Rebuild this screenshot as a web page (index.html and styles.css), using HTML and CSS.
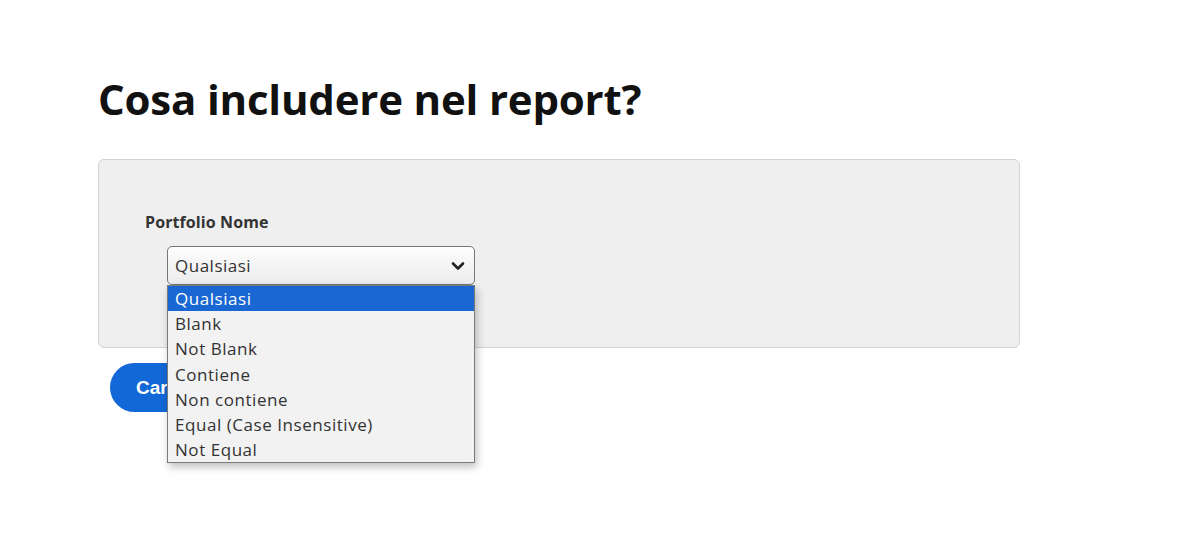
FILE: index.html
```html
<!DOCTYPE html>
<html lang="it">
<head>
<meta charset="utf-8">
<title>Report</title>
<link rel="stylesheet" href="styles.css">
</head>
<body>
<main class="page">
  <h1 class="title">Cosa includere nel report?</h1>
  <section class="panel">
    <div class="field">
      <div class="label">Portfolio Nome</div>
      <div class="select-wrap">
        <div class="select">
          <span class="select-value">Qualsiasi</span>
          <svg class="chev" width="14" height="10" viewBox="0 0 14 10"><path d="M2 2.5 L7 7.5 L12 2.5" fill="none" stroke="#222" stroke-width="2.6" stroke-linecap="round" stroke-linejoin="round"/></svg>
        </div>
        <ul class="dropdown">
          <li class="opt active">Qualsiasi</li>
          <li class="opt">Blank</li>
          <li class="opt">Not Blank</li>
          <li class="opt">Contiene</li>
          <li class="opt">Non contiene</li>
          <li class="opt">Equal (Case Insensitive)</li>
          <li class="opt">Not Equal</li>
        </ul>
      </div>
    </div>
  </section>
  <div class="actions">
    <button class="btn">Carica</button>
  </div>
</main>
</body>
</html>
```

FILE: styles.css
```css
html, body {
  margin: 0;
  padding: 0;
  background: #ffffff;
}
html { height: 100%; }
body {
  min-height: 535px;
  font-family: "Open Sans", "Liberation Sans", sans-serif;
  color: #333;
}
.page {
  padding: 70px 0 0 98px;
  width: 922px;
}
.title {
  margin: 0;
  font-family: "Open Sans", "Noto Sans", sans-serif;
  font-weight: 700;
  font-size: 42px;
  line-height: 58px;
  color: #111;
  letter-spacing: -0.2px;
}
.panel {
  margin-top: 31px;
  height: 187px;
  border: 1px solid #d3d3d3;
  border-radius: 6px;
  background: #efefef;
}
.field {
  padding: 52px 0 0 46px;
}
.label {
  font-family: "Open Sans", sans-serif;
  font-weight: 700;
  font-size: 16px;
  line-height: 20px;
  color: #333;
  letter-spacing: 0.1px;
}
.select-wrap {
  position: relative;
  margin: 14px 0 0 22px;
  width: 308px;
}
.select {
  box-sizing: border-box;
  height: 39px;
  border: 1px solid #777;
  border-radius: 5px;
  background: linear-gradient(#fdfdfd, #ececec);
  display: flex;
  align-items: center;
  justify-content: space-between;
  padding: 0 9px 0 7px;
}
.select-value {
  font-family: "Open Sans", sans-serif;
  font-size: 17px;
  color: #333;
  letter-spacing: 0.5px;
}
.chev { display: block; }
.dropdown {
  position: absolute;
  left: 0;
  top: 39px;
  width: 308px;
  box-sizing: border-box;
  margin: 0;
  padding: 0;
  list-style: none;
  background: #f2f2f2;
  border: 1px solid #7a7a7a;
  box-shadow: 2px 4px 8px rgba(0,0,0,0.25);
  z-index: 5;
}
.opt {
  height: 25.2px;
  line-height: 26px;
  padding-left: 7px;
  font-family: "Open Sans", sans-serif;
  font-size: 17px;
  color: #333;
  letter-spacing: 0.55px;
  white-space: nowrap;
}
.opt.active {
  background: #1967d2;
  color: #fff;
}
.actions {
  margin-top: 15px;
  padding-left: 12px;
}
.btn {
  height: 49px;
  min-width: 150px;
  border: none;
  border-radius: 25px;
  background: #1268d6;
  color: #fff;
  font-family: "Liberation Sans", Arial, sans-serif;
  font-weight: 700;
  font-size: 19px;
  padding: 0 26px;
  text-align: left;
}
```
